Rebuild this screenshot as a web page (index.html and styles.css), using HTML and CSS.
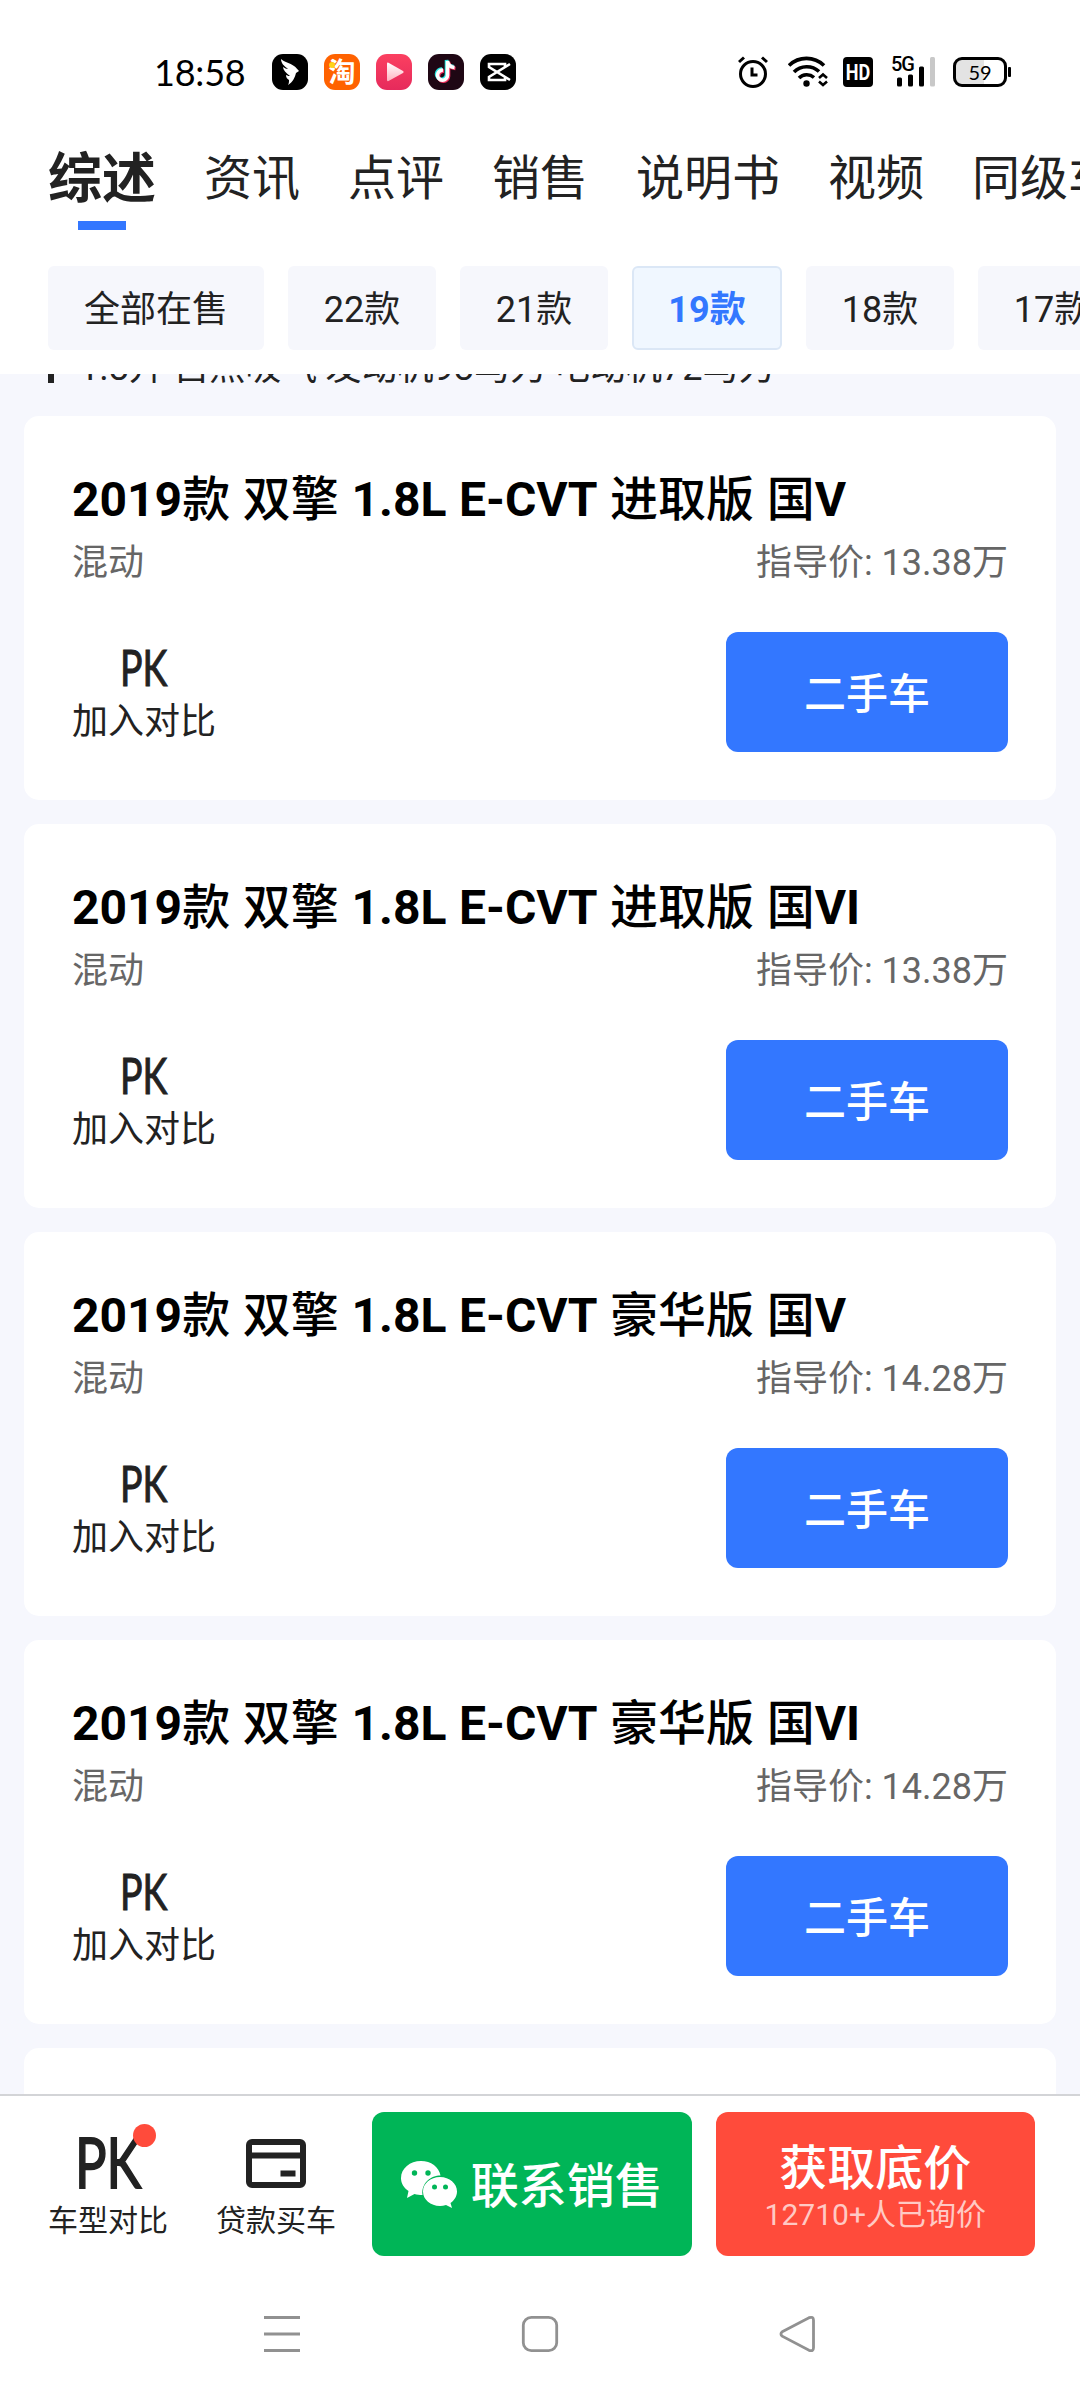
FILE: index.html
```html
<!DOCTYPE html>
<html lang="zh-CN">
<head>
<meta charset="utf-8">
<title>车型综述</title>
<link rel="stylesheet" href="styles.css">
</head>
<body>
<div class="screen">
  <header class="header">
    <div class="status">
      <span class="time">18:58</span>
      <div class="apps">
        <svg class="app" viewBox="0 0 36 36"><rect width="36" height="36" rx="11" fill="#000"/><path d="M9 5c3 3 9 4 13 7 2 1 3 3 5 5l-3 2c-1 4-3 9-8 12 1-2 1-3 1-5-2-1-3-3-3-5 2 1 3 1 4 1-4-3-7-6-7-9 2 1 3 2 5 2-4-3-7-6-7-10z" fill="#fff"/></svg>
        <span class="app app-tao">淘<i class="tao-dot"></i></span>
        <svg class="app" viewBox="0 0 36 36"><defs><linearGradient id="pg" x2="0" y2="1"><stop stop-color="#fb4060"/><stop offset="1" stop-color="#e62a5c"/></linearGradient><linearGradient id="pt" x2="0" y2="1"><stop stop-color="#fff"/><stop offset="1" stop-color="#ffb3c0"/></linearGradient></defs><rect width="36" height="36" rx="11" fill="url(#pg)"/><path d="M11 9.500q0-1.500 1.500-.8L27 17q1.500 1 0 2l-14.500 8Q11 27.500 11 26z" fill="url(#pt)"/></svg>
        <svg class="app" viewBox="0 0 36 36"><rect width="36" height="36" rx="11" fill="#1f0714"/><g fill="none" stroke-width="3.600"><path d="M15 16.200a5 5 0 1 0 4.500 5V7c.5 4 3 6 7 6.500" stroke="#25e5df" transform="translate(-1 -1)"/><path d="M15 16.200a5 5 0 1 0 4.500 5V7c.5 4 3 6 7 6.500" stroke="#f5315f" transform="translate(1 1)"/><path d="M15 16.200a5 5 0 1 0 4.500 5V7c.5 4 3 6 7 6.500" stroke="#fff"/></g></svg>
        <svg class="app" viewBox="0 0 36 36"><rect width="36" height="36" rx="11" fill="#000"/><path d="M30 10L9 23v3h16v-3.500M30 26L9 13v-3h16v3.500" fill="none" stroke="#fff" stroke-width="2.600"/></svg>
      </div>
      <div class="signals">
        <svg class="sig-alarm" width="30" height="32" viewBox="0 0 30 32" fill="none" stroke="#000" stroke-width="3"><circle cx="15" cy="18" r="12.500"/><path d="M14 11.500v7.500h5.500M1 6l5-4.500M29 6l-5-4.500"/></svg>
        <svg class="sig-wifi" width="40" height="32" viewBox="0 0 40 32" fill="none" stroke="#000" stroke-width="3.600"><path d="M1 9.500a25 25 0 0 1 35 0M6 16a18 18 0 0 1 25-.5M11 22a11 11 0 0 1 15-.5"/><circle cx="18.500" cy="27.500" r="3.200" fill="#000" stroke="none"/><path d="M31 22l4-3.500 4 3.500M31 25.500l4 3.500 4-3.500" stroke-width="2.600"/></svg>
        <span class="sig-hd"><span class="hd-text">HD</span></span>
        <span class="sig-cell"><b class="net">5G</b><svg width="44" height="32" viewBox="0 0 44 32"><rect x="5" y="21.500" width="5" height="9" rx="1.500"/><rect x="16" y="18.500" width="5" height="12" rx="1.500"/><rect x="27" y="10.500" width="5" height="20" rx="1.500"/><rect x="38" y="1" width="5" height="29.500" rx="1.500" fill="#c8c8c8"/></svg></span>
        <span class="battery">59</span>
      </div>
    </div>
    <nav class="tabs">
      <span class="tab active">综述</span><span class="tab">资讯</span><span class="tab">点评</span><span class="tab">销售</span><span class="tab">说明书</span><span class="tab">视频</span><span class="tab">同级车</span>
    </nav>
    <div class="chips">
      <span class="chip wide">全部在售</span><span class="chip">22款</span><span class="chip">21款</span><span class="chip selected">19款</span><span class="chip">18款</span><span class="chip">17款</span>
    </div>
  </header>

  <main class="list">
    <h2 class="group">1.8升 自然吸气 发动机98马力 电动机72马力</h2>
    <section class="card">
      <h3 class="name"><b>2019</b>款 双擎 <b>1.8L E-CVT</b> 进取版 国<b>V</b></h3>
      <div class="meta"><span>混动</span><span>指导价: 13.38万</span></div>
      <div class="actions"><div class="compare"><span class="pk">PK</span><span>加入对比</span></div><span class="used">二手车</span></div>
    </section>
    <section class="card">
      <h3 class="name"><b>2019</b>款 双擎 <b>1.8L E-CVT</b> 进取版 国<b>VI</b></h3>
      <div class="meta"><span>混动</span><span>指导价: 13.38万</span></div>
      <div class="actions"><div class="compare"><span class="pk">PK</span><span>加入对比</span></div><span class="used">二手车</span></div>
    </section>
    <section class="card">
      <h3 class="name"><b>2019</b>款 双擎 <b>1.8L E-CVT</b> 豪华版 国<b>V</b></h3>
      <div class="meta"><span>混动</span><span>指导价: 14.28万</span></div>
      <div class="actions"><div class="compare"><span class="pk">PK</span><span>加入对比</span></div><span class="used">二手车</span></div>
    </section>
    <section class="card">
      <h3 class="name"><b>2019</b>款 双擎 <b>1.8L E-CVT</b> 豪华版 国<b>VI</b></h3>
      <div class="meta"><span>混动</span><span>指导价: 14.28万</span></div>
      <div class="actions"><div class="compare"><span class="pk">PK</span><span>加入对比</span></div><span class="used">二手车</span></div>
    </section>
    <section class="card"></section>
  </main>

  <footer class="footer">
    <div class="bar">
      <div class="tool"><span class="tool-icon"><span class="pk pk-large">PK</span><i class="badge"></i></span><span>车型对比</span></div>
      <div class="tool"><span class="tool-icon"><svg width="60" height="49" viewBox="0 0 60 49"><rect x="3" y="3" width="54" height="43" rx="3" fill="none" stroke="#222" stroke-width="6"/><path d="M3 16.500h54M34.500 34.500h15" stroke="#222" stroke-width="6"/></svg></span><span>贷款买车</span></div>
      <div class="cta green">
        <svg width="56" height="47" viewBox="0 0 56 47"><path d="M20 0C9 0 0 7.500 0 17c0 5.500 3 10 7.500 13L6 37l7.500-4c2.500.7 5 1 8 1C20 22 30 14.500 39.500 14.500 38 6 30 0 20 0z" fill="#fff"/><path d="M39 16c-9.500 0-17 6.500-17 14.500S29.500 45 39 45c2 0 4-.3 6-1l6 3-1.500-5c4-2.700 6.500-7 6.500-11.500C56 22.500 48.500 16 39 16z" fill="#fff"/><g fill="#00b557"><circle cx="13.500" cy="12" r="2.700"/><circle cx="27" cy="12" r="2.700"/><circle cx="33.500" cy="26" r="2.500"/><circle cx="44.500" cy="26" r="2.500"/></g></svg>
        <span class="cta-title">联系销售</span>
      </div>
      <div class="cta red"><span class="cta-title">获取底价</span><span class="cta-sub">12710+人已询价</span></div>
    </div>
    <div class="sysnav">
      <svg width="40" height="40" viewBox="0 0 40 40" fill="none" stroke="#919191" stroke-width="3"><path d="M2 3.500h36M2 20h36M2 36.500h36"/></svg>
      <svg width="40" height="40" viewBox="0 0 40 40" fill="none" stroke="#919191" stroke-width="2.800"><rect x="3.300" y="3.300" width="33.400" height="33.400" rx="8"/></svg>
      <svg width="40" height="40" viewBox="0 0 40 40" fill="none" stroke="#919191" stroke-width="2.800"><path d="M4.200 17.800L31 3.700q4.500-1.500 4.500 2.500v27.600q0 4-4.500 2.500L4.200 22.200q-2.500-2.200 0-4.400z"/></svg>
    </div>
  </footer>
</div>
</body>
</html>
```
FILE: styles.css
```css
* { box-sizing: border-box; }
body {
  margin: 0;
  background: #fff;
  color: #222;
  font-family: Roboto, "Noto Sans CJK SC", sans-serif;
  font-size: 36px;
}
.screen {
  width: 1080px;
  height: 2400px;
  overflow: hidden;
  display: flex;
  flex-direction: column;
}
.header { height: 374px; flex: none; }

.status {
  height: 144px;
  padding: 0 69px 0 154px;
  display: flex;
  align-items: center;
  color: #000;
}
.time { width: 118px; font: 36px/36px Lato, sans-serif; letter-spacing: -.2px; }
.apps { display: flex; gap: 16px; }
.app { width: 36px; height: 36px; }
.app-tao {
  position: relative;
  border-radius: 11px;
  background: #ff6200;
  color: #fff;
  font: 700 27px/34px "Noto Sans CJK SC", sans-serif;
  text-align: center;
}
.tao-dot {
  position: absolute;
  left: 5px;
  top: 8px;
  width: 6px;
  height: 6px;
  border-radius: 50%;
  background: #ffd21a;
}
.signals { margin-left: auto; display: flex; align-items: center; }
.sig-wifi { margin-left: 20px; }
.sig-hd {
  width: 30px;
  height: 30px;
  margin-left: 15px;
  border-radius: 4px;
  background: #000;
  color: #fff;
  display: flex;
  justify-content: center;
}
.hd-text { font: 700 22px/31px Roboto, sans-serif; transform: scaleX(.82); }
.sig-cell { position: relative; margin-left: 19px; height: 32px; }
.sig-cell svg { display: block; }
.net { position: absolute; left: -1px; top: 0; font: 500 20px/17px Roboto, sans-serif; letter-spacing: -1px; }
.battery {
  position: relative;
  width: 54px;
  height: 30px;
  margin: 0 4px 0 17px;
  border: 3px solid #000;
  border-radius: 9px;
  background: linear-gradient(90deg, #e3e3e3 59%, #fff 59%);
  font: 20px/24px Lato, sans-serif;
  text-align: center;
}
.battery::after {
  content: "";
  position: absolute;
  right: -7px;
  top: 7px;
  width: 3px;
  height: 10px;
  border-radius: 1px;
  background: #000;
}

.tabs {
  height: 122px;
  padding: 0 48px;
  display: flex;
  gap: 48px;
  white-space: nowrap;
  overflow: hidden;
}
.tab { flex: none; height: 86px; font-size: 48px; line-height: 70px; }
.tab.active {
  font-size: 54px;
  font-weight: 700;
  line-height: 72px;
  display: flex;
  flex-direction: column;
  align-items: center;
}
.tab.active::after { content: ""; width: 48px; height: 9px; margin-top: 5px; background: #37f; }

.chips { display: flex; gap: 24px; padding-left: 48px; overflow: hidden; }
.chip {
  flex: none;
  width: 148px;
  height: 84px;
  border-radius: 6px;
  background: #f6f7fc;
  line-height: 89px;
  text-align: center;
}
.chip.wide { width: 216px; }
.chip.selected {
  width: 150px;
  border: 2px solid #dbe7f6;
  background: #f0f7ff;
  color: #37f;
  font-weight: 700;
  line-height: 85px;
}

.list { flex: 1; min-height: 0; overflow: hidden; padding: 0 24px; background: #f6f7fd; }
.group {
  margin: -53px 0 0 24px;
  height: 95px;
  display: flex;
  align-items: center;
  gap: 25px;
  font-size: 36px;
  font-weight: 400;
  line-height: 99px;
  word-spacing: -.7px;
}
.group::before { content: ""; width: 6px; height: 28px; background: #222; }
.card {
  height: 384px;
  margin-bottom: 24px;
  padding: 54px 48px 0;
  border-radius: 15px;
  background: #fff;
}
.name { margin: 0; height: 63px; color: #000; font-size: 48px; font-weight: 500; line-height: 59px; word-spacing: .7px; }
.name b { font-weight: 700; }
.meta { height: 60px; display: flex; justify-content: space-between; color: #666; line-height: 60px; }
.actions { margin-top: 39px; display: flex; justify-content: space-between; }
.compare { display: flex; flex-direction: column; align-items: center; line-height: 58px; padding-top: 10px; }
.pk {
  height: 51px;
  font-family: Lato, sans-serif;
  font-size: 50px;
  line-height: 51px;
  transform: scaleX(.75);
  -webkit-text-stroke: 1px #222;
}
.used {
  width: 282px;
  height: 120px;
  border-radius: 12px;
  background: #37f;
  color: #fff;
  font-size: 42px;
  font-weight: 500;
  line-height: 125px;
  text-align: center;
}

.footer { height: 306px; flex: none; border-top: 2px solid #d3d4d7; background: #fff; }
.bar { display: flex; padding: 16px 45px 0 48px; }
.tool {
  width: 120px;
  margin-right: 48px;
  display: flex;
  flex-direction: column;
  align-items: center;
  font-size: 30px;
  line-height: 42px;
}
.tool + .tool { margin-right: 36px; }
.tool-icon { position: relative; height: 88px; padding-top: 27px; }
.pk-large { display: block; height: 49px; font-size: 70px; line-height: 45px; -webkit-text-stroke: 1.8px #222; }
.badge {
  position: absolute;
  right: -4px;
  top: 12px;
  width: 23px;
  height: 23px;
  border-radius: 50%;
  background: #ff4b3b;
}
.cta {
  flex: 1;
  height: 144px;
  border-radius: 12px;
  color: #fff;
  display: flex;
  align-items: center;
  justify-content: center;
}
.green { gap: 14px; background: #00b557; }
.green .cta-title { padding-top: 5px; }
.red { margin-left: 24px; padding-top: 10px; flex-direction: column; background: #ff4b3b; }
.cta-title { font-size: 48px; font-weight: 500; line-height: 52px; }
.cta-sub { font-size: 30px; line-height: 40px; color: #ffc9c4; }
.sysnav { display: flex; justify-content: space-between; padding: 58px 262px 0; }
```
